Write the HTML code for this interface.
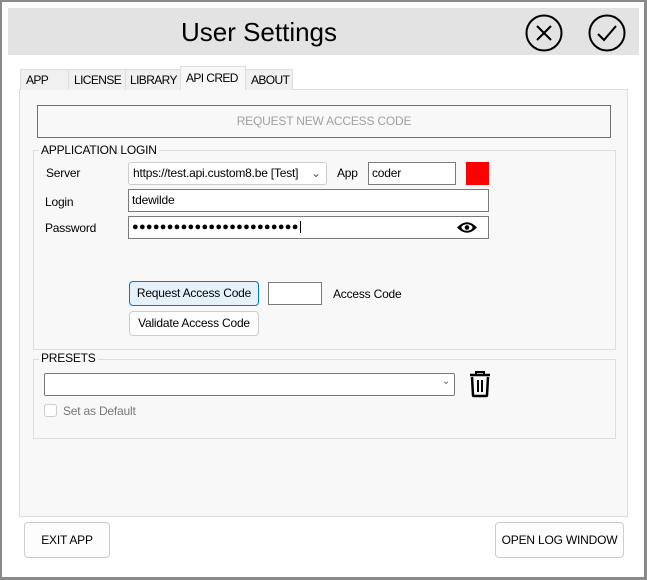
<!DOCTYPE html>
<html><head><meta charset="utf-8"><style>
*{box-sizing:border-box;margin:0;padding:0}
body{width:647px;height:580px;background:#fff;position:relative;overflow:hidden;font-family:"Liberation Sans",sans-serif;font-size:12px;color:#000;letter-spacing:-0.2px}
.a{position:absolute}
.frame{left:0;top:0;width:647px;height:580px;border:2px solid #8a8a8a;border-right-width:3px;border-bottom-width:3px}
.hdr{left:8px;top:8px;width:631px;height:47px;background:#e3e3e3}
.title{left:0;top:8px;width:518px;text-align:center;font-size:26px;line-height:48px;letter-spacing:0}
.tab{top:69px;height:21px;border:1px solid #ddd;border-bottom:none;background:#f0f0f0;font-size:12px;line-height:20px;padding-left:5px;letter-spacing:-0.6px;white-space:nowrap;overflow:hidden}
.panel{left:19px;top:89px;width:609px;height:428px;background:#f8f8f8;border:1px solid #ddd}
.grp{border:1px solid #ddd}
.leg{background:#f8f8f8;padding:0 2px;font-size:12px;line-height:14px}
.inp{background:#fff;border:1px solid #7a7a7a;font-size:12px;padding-left:3px;line-height:20px}
.btn{background:#fdfdfd;border:1px solid #ccc;border-radius:4px;text-align:center;font-size:12px}
</style></head><body>
<div class="a frame"></div>
<div class="a hdr"></div>
<div class="a title">User Settings</div>
<svg class="a" style="left:524px;top:13px" width="40" height="40" viewBox="0 0 40 40"><circle cx="20" cy="20" r="17.5" fill="none" stroke="#000" stroke-width="2"/><path d="M13 13L27 27M27 13L13 27" stroke="#000" stroke-width="2"/></svg>
<svg class="a" style="left:587px;top:13px" width="40" height="40" viewBox="0 0 40 40"><circle cx="20" cy="20" r="17.5" fill="none" stroke="#000" stroke-width="2"/><path d="M11 21L17 27L29 13" fill="none" stroke="#000" stroke-width="2"/></svg>

<div class="a panel"></div>
<div class="a tab" style="left:20px;width:49px">APP</div>
<div class="a tab" style="left:68px;width:58px">LICENSE</div>
<div class="a tab" style="left:125px;width:56px;padding-left:4px">LIBRARY</div>
<div class="a tab" style="left:180px;top:66px;height:24px;width:66px;background:#f8f8f8;line-height:22px">API CRED</div>
<div class="a tab" style="left:245px;width:48px">ABOUT</div>

<div class="a" style="left:37px;top:105px;width:574px;height:33px;border:1px solid #707070;background:#f8f8f8;text-align:center;line-height:31px;color:#a0a0a0">REQUEST NEW ACCESS CODE</div>

<div class="a grp" style="left:33px;top:150px;width:583px;height:200px"></div>
<div class="a leg" style="left:39px;top:143px">APPLICATION LOGIN</div>
<div class="a" style="left:46px;top:166px">Server</div>
<div class="a" style="left:128px;top:162px;width:199px;height:23px;border:1px solid #ccc;border-radius:3px;background:#fff;line-height:21px;padding-left:4px">https://test.api.custom8.be [Test]<span style="position:absolute;right:5px;top:0;color:#555">&#8964;</span></div>
<div class="a" style="left:337px;top:166px">App</div>
<div class="a inp" style="left:368px;top:162px;width:88px;height:23px">coder</div>
<div class="a" style="left:466px;top:162px;width:23px;height:23px;background:#f00"></div>
<div class="a" style="left:45px;top:195px">Login</div>
<div class="a inp" style="left:128px;top:189px;width:361px;height:23px">tdewilde</div>
<div class="a" style="left:45px;top:221px">Password</div>
<div class="a inp" style="left:128px;top:216px;width:361px;height:23px;letter-spacing:0.3px;font-size:11px">●●●●●●●●●●●●●●●●●●●●●●●●<span style="border-left:1px solid #000;margin-left:1px"></span></div>
<svg class="a" style="left:456px;top:220px" width="22" height="15" viewBox="0 0 22 15"><path d="M1 7.5Q11 -3 21 7.5Q11 18 1 7.5Z" fill="#000"/><ellipse cx="11" cy="7.5" rx="5.5" ry="3.2" fill="#fff"/><circle cx="11" cy="7.5" r="2.3" fill="#000"/></svg>

<div class="a btn" style="left:129px;top:281px;width:130px;height:25px;background:#e5f1fb;border-color:#0078d4;line-height:23px">Request Access Code</div>
<div class="a" style="left:268px;top:282px;width:54px;height:23px;border:1px solid #7a7a7a;background:#fff"></div>
<div class="a" style="left:333px;top:287px">Access Code</div>
<div class="a btn" style="left:129px;top:311px;width:130px;height:25px;line-height:23px">Validate Access Code</div>

<div class="a grp" style="left:33px;top:359px;width:583px;height:80px"></div>
<div class="a leg" style="left:39px;top:351px">PRESETS</div>
<div class="a" style="left:44px;top:373px;width:411px;height:23px;border:1px solid #7a7a7a;border-radius:2px;background:#fff"><span style="position:absolute;right:4px;top:2px;color:#666;font-size:10px">&#8964;</span></div>
<svg class="a" style="left:468px;top:370px" width="24" height="28" viewBox="0 0 24 28"><path d="M8 4V2H16V4" fill="none" stroke="#000" stroke-width="2"/><path d="M2 5H22" stroke="#000" stroke-width="2.5"/><path d="M4 7L5 25Q5 26 6 26H18Q19 26 19 25L20 7" fill="none" stroke="#000" stroke-width="2.5"/><path d="M10 10V22M14 10V22" stroke="#000" stroke-width="2"/></svg>
<div class="a" style="left:44px;top:404px;width:13px;height:13px;border:1px solid #ccc;border-radius:3px;background:#fff"></div>
<div class="a" style="left:63px;top:404px;color:#777">Set as Default</div>

<div class="a btn" style="left:24px;top:522px;width:86px;height:36px;line-height:34px">EXIT APP</div>
<div class="a btn" style="left:495px;top:522px;width:129px;height:36px;line-height:34px">OPEN LOG WINDOW</div>
</body></html>
